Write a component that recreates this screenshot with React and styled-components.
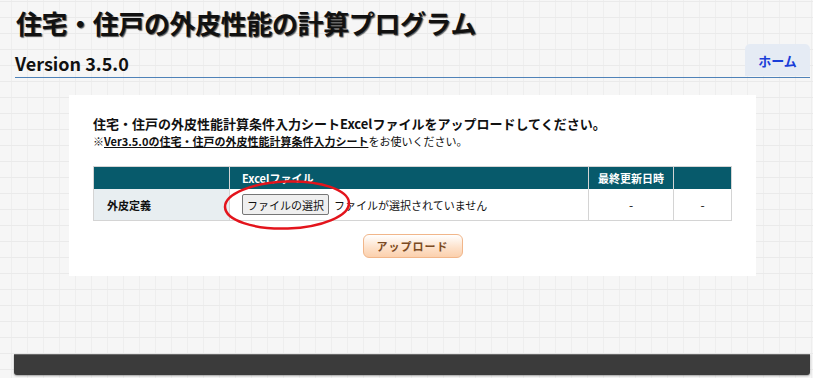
import React from "react";
import styled, { createGlobalStyle } from "styled-components";

const GlobalStyle = createGlobalStyle`
  html, body {
    margin: 0;
    padding: 0;
  }
  body {
    width: 813px;
    height: 378px;
    overflow: hidden;
    font-family: "Noto Sans CJK JP", "Noto Sans", sans-serif;
    color: #111;
    background-color: #f6f6f6;
    background-image:
      linear-gradient(#eaeaea 1px, transparent 1px),
      linear-gradient(90deg, #eeeeee 1px, transparent 1px);
    background-size: 16px 16px;
    background-position: 0 1px, 11px 0;
  }
`;

const Page = styled.div`
  display: flex;
  flex-direction: column;
  height: 378px;
  padding: 0 3px 0 15px;
  box-sizing: border-box;
`;

const Title = styled.h1`
  margin: 5px 0 0 1px;
  font-size: 26px;
  line-height: 36px;
  font-weight: 700;
  color: #111;
  letter-spacing: -0.4px;
  text-shadow: 1px 1px 1px #555;
`;

const VersionBar = styled.div`
  display: flex;
  align-items: flex-end;
  justify-content: space-between;
  margin-top: 2px;
  border-bottom: 1px solid #4f82b8;
  height: 34px;
`;

const Version = styled.h2`
  margin: 0 0 3px 0;
  font-size: 18px;
  line-height: 22px;
  font-weight: 700;
  color: #111;
`;

const HomeTab = styled.a`
  display: flex;
  align-items: center;
  justify-content: center;
  width: 65px;
  height: 32px;
  margin-bottom: 1px;
  background: #e5ebf4;
  border-radius: 5px 5px 0 0;
  color: #1a3ed8;
  font-size: 13px;
  font-weight: 700;
  text-decoration: none;
`;

const Panel = styled.section`
  align-self: center;
  width: 687px;
  margin-top: 17px;
  padding: 20px 24px 18px;
  box-sizing: border-box;
  background: #fff;
`;

const Lead = styled.p`
  margin: 0;
  font-size: 13px;
  line-height: 18px;
  font-weight: 700;
`;

const Note = styled.p`
  margin: 0 0 17px;
  font-size: 11px;
  line-height: 16px;
`;

const Mark = styled.span`
  color: #222;
`;

const SheetLink = styled.a`
  color: #111;
  font-weight: 700;
  text-decoration: underline;
`;

const Table = styled.table`
  width: 100%;
  border-collapse: collapse;
  border: 1px solid #d4d4d4;
`;

const Head = styled.th`
  height: 22px;
  padding: 0 ${(p) => (p.left ? "12px" : "4px")};
  background: #075a6b;
  color: #fff;
  font-size: 11px;
  font-weight: 700;
  text-align: ${(p) => (p.left ? "left" : "center")};
  border-left: 1px solid #d4d4d4;
  width: ${(p) => p.w || "auto"};
`;

const Cell = styled.td`
  height: 31px;
  padding: 0 ${(p) => (p.label ? "13px" : p.left ? "12px" : "4px")};
  background: ${(p) => (p.label ? "#e8eef1" : "#fff")};
  font-size: ${(p) => (p.label ? "11px" : "12px")};
  font-weight: ${(p) => (p.label ? 700 : 400)};
  text-align: ${(p) => (p.label || p.left ? "left" : "center")};
  border-left: 1px solid #d4d4d4;
`;

const FilePick = styled.div`
  position: relative;
  display: flex;
  align-items: center;
  gap: 5px;
`;

const FileButton = styled.button`
  height: 21px;
  padding: 0 4px;
  border: 1px solid #767676;
  border-radius: 2px;
  background: #efefef;
  font-family: inherit;
  font-size: 11px;
  color: #111;
`;

const FileName = styled.span`
  font-size: 11px;
  color: #111;
`;

const Circle = styled.svg`
  position: absolute;
  left: -21px;
  top: -16px;
  pointer-events: none;
`;

const Actions = styled.div`
  display: flex;
  justify-content: center;
  margin-top: 13px;
`;

const UploadButton = styled.button`
  width: 100px;
  height: 24px;
  border: 1px solid #f1b68a;
  border-radius: 6px;
  background: linear-gradient(#ffffff, #fde0c8 60%, #fbd0ad);
  color: #7b4a22;
  font-family: inherit;
  font-size: 11px;
  font-weight: 700;
  letter-spacing: 1px;
`;

const Footer = styled.footer`
  margin-top: auto;
  margin-bottom: 3px;
  margin-left: -1px;
  height: 20px;
  background: #3b3b3b;
  border-top: 1px solid #6a6a6a;
  border-radius: 0 0 3px 3px;
  box-shadow: 0 1px 2px rgba(0, 0, 0, 0.35);
`;

export default function App() {
  return (
    <>
      <GlobalStyle />
      <Page>
        <Title>住宅・住戸の外皮性能の計算プログラム</Title>
        <VersionBar>
          <Version>Version 3.5.0</Version>
          <HomeTab href="#">ホーム</HomeTab>
        </VersionBar>
        <Panel>
          <Lead>
            住宅・住戸の外皮性能計算条件入力シートExcelファイルをアップロードしてください。
          </Lead>
          <Note>
            <Mark>※</Mark>
            <SheetLink href="#">Ver3.5.0の住宅・住戸の外皮性能計算条件入力シート</SheetLink>
            をお使いください。
          </Note>
          <Table>
            <thead>
              <tr>
                <Head w="127px" />
                <Head left>Excelファイル</Head>
                <Head w="76px">最終更新日時</Head>
                <Head w="49px" />
              </tr>
            </thead>
            <tbody>
              <tr>
                <Cell label>外皮定義</Cell>
                <Cell left>
                  <FilePick>
                    <FileButton>ファイルの選択</FileButton>
                    <FileName>ファイルが選択されていません</FileName>
                    <Circle width="132" height="54" viewBox="0 0 132 54">
                      <ellipse
                        cx="66"
                        cy="27"
                        rx="62"
                        ry="23.5"
                        fill="none"
                        stroke="#e3141c"
                        strokeWidth="2.5"
                        transform="rotate(-2 66 27)"
                      />
                    </Circle>
                  </FilePick>
                </Cell>
                <Cell>-</Cell>
                <Cell>-</Cell>
              </tr>
            </tbody>
          </Table>
          <Actions>
            <UploadButton>アップロード</UploadButton>
          </Actions>
        </Panel>
        <Footer />
      </Page>
    </>
  );
}
